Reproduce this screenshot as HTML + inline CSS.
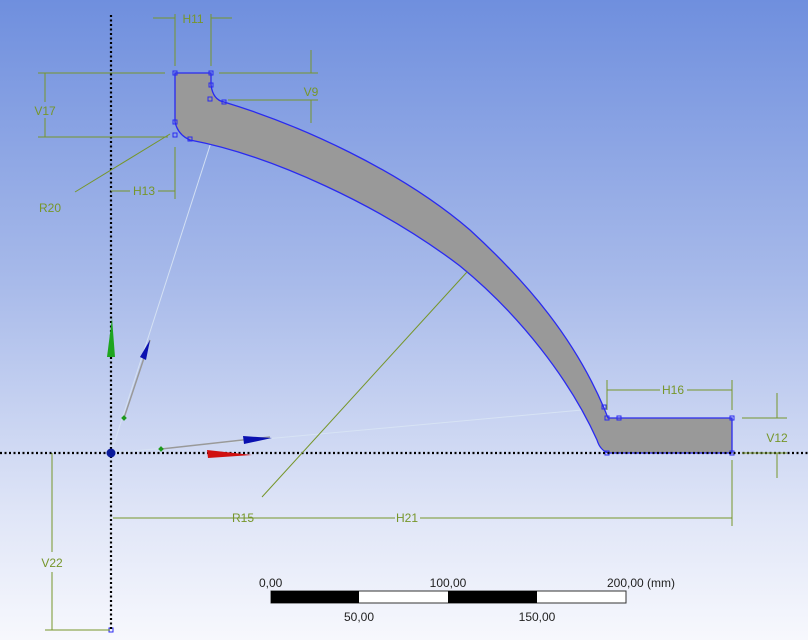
<!DOCTYPE html>
<html><head><meta charset="utf-8"><style>
html,body{margin:0;padding:0}
body{width:808px;height:640px;overflow:hidden;background:linear-gradient(#6f8fde 0%,#a9bbea 45%,#dfe5f7 80%,#f7f8fd 100%);font-family:"Liberation Sans",sans-serif}
svg{position:absolute;left:0;top:0}
</style></head><body>
<svg width="808" height="640" viewBox="0 0 808 640">
<g stroke="#d8e4f4" stroke-width="1" fill="none" opacity="0.9">
<line x1="111" y1="453" x2="224" y2="102"/>
<line x1="111" y1="453" x2="604" y2="408"/>
</g>
<path d="M175,73 L211,73 L211,85 Q213,100 224,102 C300,125 400,170 470,230 C530,285 575,340 604,408 L608,418 L732,418 L732,453 L608,453 Q600,450 597,440 C570,380 520,315 460,266 C380,205 270,155 190,140 Q178,135 175,122 Z" fill="#999" stroke="#2a2af0" stroke-width="1.3"/>
<g fill="none" stroke="#2a2af0" stroke-width="1">
<rect x="173" y="71" width="4" height="4"/><rect x="209" y="71" width="4" height="4"/><rect x="209" y="83" width="4" height="4"/><rect x="208" y="97" width="4" height="4"/><rect x="222" y="100" width="4" height="4"/><rect x="173" y="120" width="4" height="4"/><rect x="173" y="133" width="4" height="4"/><rect x="188" y="137" width="4" height="4"/><rect x="602" y="405" width="4" height="4"/><rect x="605" y="416" width="4" height="4"/><rect x="617" y="416" width="4" height="4"/><rect x="730" y="416" width="4" height="4"/><rect x="730" y="451" width="4" height="4"/><rect x="605" y="451" width="4" height="4"/><rect x="109" y="628" width="4" height="4"/>
</g>
<g stroke="#000" stroke-width="2.2" stroke-dasharray="2 2.5">
<line x1="111" y1="15" x2="111" y2="630"/>
<line x1="0" y1="453" x2="808" y2="453"/>
</g>
<circle cx="111" cy="453" r="4.5" fill="#0a1a9a"/>
<g stroke="#76962a" stroke-width="1" fill="none">
<line x1="175" y1="14" x2="175" y2="66"/><line x1="211" y1="14" x2="211" y2="66"/>
<line x1="153" y1="18" x2="175" y2="18"/><line x1="211" y1="18" x2="232" y2="18"/>
<line x1="219" y1="73" x2="318" y2="73"/><line x1="228" y1="100" x2="318" y2="100"/>
<line x1="311" y1="50" x2="311" y2="73"/><line x1="311" y1="100" x2="311" y2="123"/>
<line x1="38" y1="73" x2="165" y2="73"/><line x1="38" y1="137" x2="168" y2="137"/>
<line x1="45" y1="73" x2="45" y2="102"/><line x1="45" y1="118" x2="45" y2="137"/>
<line x1="175" y1="147" x2="175" y2="199"/>
<line x1="111" y1="191" x2="130" y2="191"/><line x1="158" y1="191" x2="175" y2="191"/>
<line x1="75" y1="192" x2="170" y2="134"/>
<line x1="607" y1="380" x2="607" y2="410"/><line x1="732" y1="380" x2="732" y2="410"/>
<line x1="607" y1="390" x2="660" y2="390"/><line x1="687" y1="390" x2="732" y2="390"/>
<line x1="742" y1="418" x2="787" y2="418"/><line x1="742" y1="453" x2="787" y2="453"/>
<line x1="777" y1="393" x2="777" y2="418"/><line x1="777" y1="453" x2="777" y2="478"/>
<line x1="732" y1="460" x2="732" y2="526"/>
<line x1="113" y1="518" x2="395" y2="518"/><line x1="420" y1="518" x2="732" y2="518"/>
<line x1="262" y1="497" x2="467" y2="272"/>
<line x1="45" y1="630" x2="110" y2="630"/>
<line x1="52" y1="453" x2="52" y2="552"/><line x1="52" y1="572" x2="52" y2="630"/>
</g>
<g fill="#76962a" font-size="12">
<text x="193" y="23" text-anchor="middle">H11</text>
<text x="311" y="96" text-anchor="middle">V9</text>
<text x="45" y="115" text-anchor="middle">V17</text>
<text x="144" y="195" text-anchor="middle">H13</text>
<text x="50" y="212" text-anchor="middle">R20</text>
<text x="673" y="394" text-anchor="middle">H16</text>
<text x="777" y="442" text-anchor="middle">V12</text>
<text x="407" y="522" text-anchor="middle">H21</text>
<text x="243" y="522" text-anchor="middle">R15</text>
<text x="52" y="567" text-anchor="middle">V22</text>
</g>
<line x1="124" y1="418" x2="150" y2="340" stroke="#999" stroke-width="1.5"/>
<line x1="161" y1="449" x2="270" y2="437" stroke="#999" stroke-width="1.5"/>
<polygon points="107,357 115,357 112,318" fill="#1ea51e"/>
<polygon points="140,357 146,360 150,340" fill="#0a10b0"/>
<polygon points="243,436 244,444 272,438" fill="#0a10b0"/>
<polygon points="207,450 208,458 252,455" fill="#d01010"/>
<rect x="122" y="416" width="4" height="4" fill="#1c9a1c" transform="rotate(45 124 418)"/>
<rect x="159" y="447" width="4" height="4" fill="#1c9a1c" transform="rotate(45 161 449)"/>
<rect x="271" y="591" width="355" height="12" fill="#fff" stroke="#333" stroke-width="1"/>
<rect x="271" y="591" width="88" height="12" fill="#000"/>
<rect x="448" y="591" width="89" height="12" fill="#000"/>
<g fill="#222" font-size="12">
<text x="259" y="587">0,00</text>
<text x="448" y="587" text-anchor="middle">100,00</text>
<text x="607" y="587">200,00 (mm)</text>
<text x="359" y="621" text-anchor="middle">50,00</text>
<text x="537" y="621" text-anchor="middle">150,00</text>
</g>
</svg>
</body></html>
